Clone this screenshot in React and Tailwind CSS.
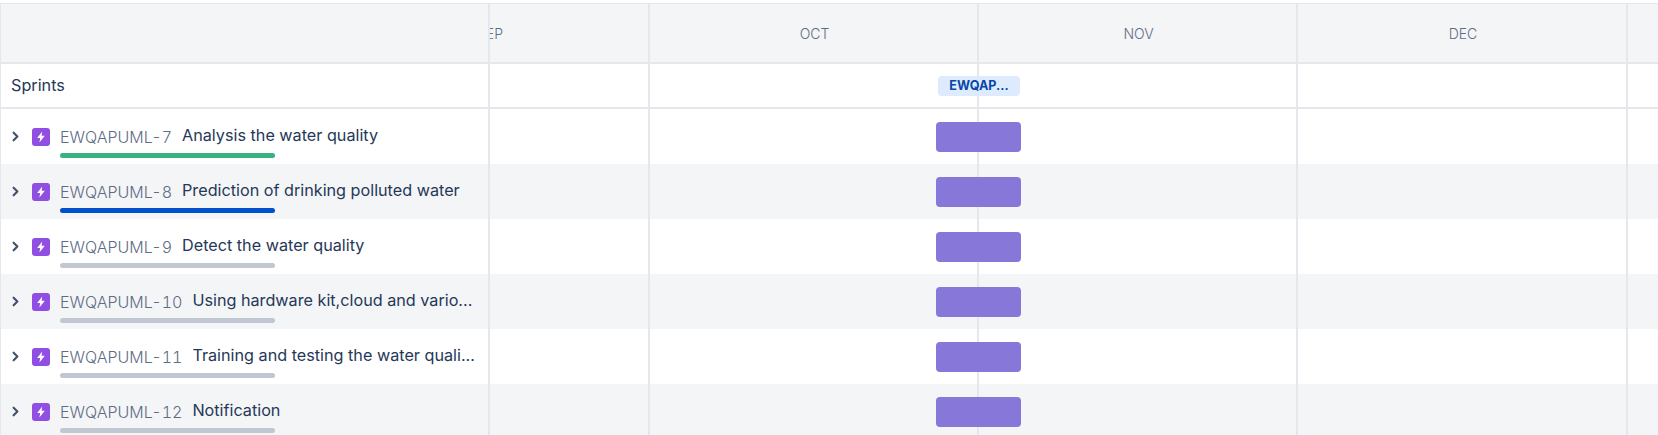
import { ChevronRight } from "lucide-react";

const MONTHS = [
  { name: "SEP", width: "w-[320px] ml-[-160px]" },
  { name: "OCT", width: "w-[329px]" },
  { name: "NOV", width: "w-[319px]" },
  { name: "DEC", width: "w-[330px]" },
  { name: "", width: "w-[330px]" },
];

const ISSUES = [
  { id: "EWQAPUML-7", title: "Analysis the water quality", bar: "bg-[#36b37e]" },
  { id: "EWQAPUML-8", title: "Prediction of drinking polluted water", bar: "bg-[#0052cc]" },
  { id: "EWQAPUML-9", title: "Detect the water quality", bar: "bg-[#c1c7d0]" },
  { id: "EWQAPUML-10", title: "Using hardware kit,cloud and vario...", bar: "bg-[#c1c7d0]" },
  { id: "EWQAPUML-11", title: "Training and testing the water quali...", bar: "bg-[#c1c7d0]" },
  { id: "EWQAPUML-12", title: "Notification", bar: "bg-[#c1c7d0]" },
];

function Timeline({ labels, children }) {
  return (
    <div className="relative flex-1 h-full overflow-hidden flex">
      {MONTHS.map((m) => (
        <div key={m.name} className={`${m.width} shrink-0 h-full border-r-2 border-[#e6e7ec] flex items-center justify-center pl-[2px] pt-[2px] text-sm font-light text-[#5e6c84]`}>
          {labels && m.name}
        </div>
      ))}
      {children}
    </div>
  );
}

function EpicIcon() {
  return (
    <div className="w-[18px] h-[18px] rounded-[3px] bg-[#904ee2] flex items-center justify-center shrink-0">
      <svg width="10" height="12" viewBox="0 0 10 12">
        <path d="M6.2 0.5 L1.2 7 H4.2 L3.4 11.5 L8.8 4.7 H5.6 Z" fill="#fff" />
      </svg>
    </div>
  );
}

function IssueRow({ issue, shaded }) {
  return (
    <div className={`h-[55px] flex shrink-0 ${shaded ? "bg-[#f4f5f7]" : "bg-white"}`}>
      <div className="w-[489px] shrink-0 border-r-2 border-[#e6e7ec] flex items-start pl-[7px]">
        <ChevronRight size={15} strokeWidth={3.5} className="text-[#42526e] mt-[20px] shrink-0" />
        <div className="ml-[9px] mt-[19px]"><EpicIcon /></div>
        <div className="ml-[10px] relative h-full flex-1 min-w-0">
          <div className="flex gap-[10px] pt-[14px] leading-[24px] whitespace-nowrap">
            <span className="text-[16px] font-light tabular-nums text-[#5e6c84] mt-[2px]">{issue.id}</span>
            <span className="text-[16.2px] text-[#253858]">{issue.title}</span>
          </div>
          <div className={`absolute left-0 top-[44px] w-[215px] h-[5px] rounded-[3px] ${issue.bar}`} />
        </div>
      </div>
      <Timeline>
        <div className="absolute left-[446px] top-[13px] w-[85px] h-[30px] rounded-[4px] bg-[#8777d9]" />
      </Timeline>
    </div>
  );
}

export default function App() {
  return (
    <div className="w-[1658px] h-[435px] overflow-hidden bg-white pt-[3px] font-['Inter',sans-serif]">
      <div className="h-[432px] border-l border-t border-[#e6e7ec] flex flex-col overflow-hidden">
        {/* Month header */}
        <div className="h-[60px] flex shrink-0 bg-[#f4f5f7] border-b-2 border-[#e6e7ec]">
          <div className="w-[489px] shrink-0 border-r-2 border-[#e6e7ec]" />
          <Timeline labels />
        </div>

        {/* Sprints */}
        <div className="h-[45px] flex shrink-0 bg-white border-b-2 border-[#e6e7ec]">
          <div className="w-[489px] shrink-0 border-r-2 border-[#e6e7ec] flex items-center pl-[10px] text-[16.2px] text-[#253858]">
            Sprints
          </div>
          <Timeline>
            <div className="absolute left-[448px] top-[12px] w-[82px] h-[20px] rounded-[4px] bg-[#deebff] text-[#0747a6] text-[12.6px] font-bold flex items-center justify-center">
              EWQAP...
            </div>
          </Timeline>
        </div>

        {ISSUES.map((issue, i) => (
          <IssueRow key={issue.id} issue={issue} shaded={i % 2 === 1} />
        ))}
      </div>
    </div>
  );
}
